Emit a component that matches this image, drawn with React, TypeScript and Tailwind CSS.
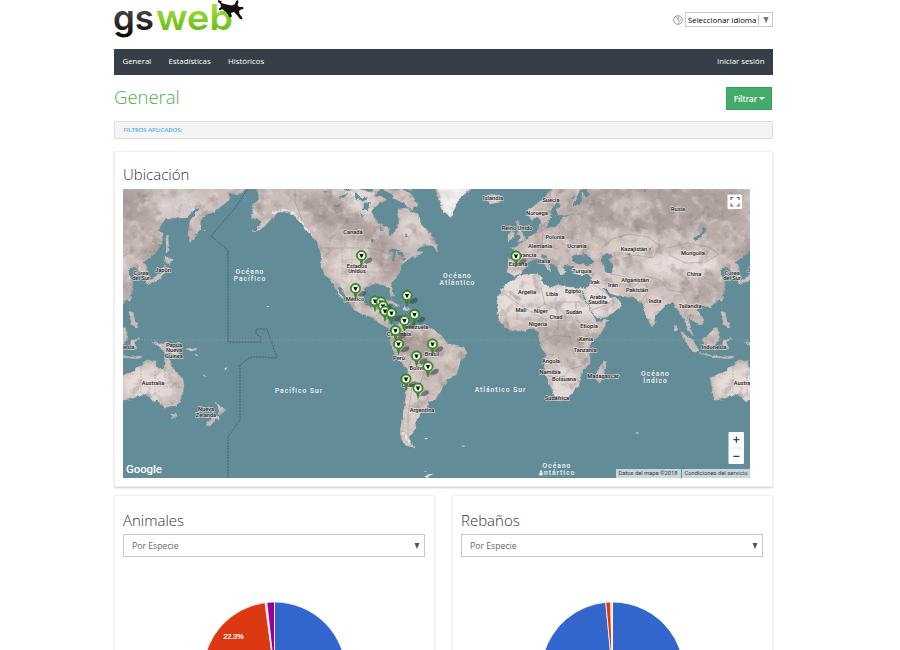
import React from "react";

const OPEN = "font-['Open_Sans','Noto_Sans',sans-serif]";

const EURASIA =
  "M554 189L560 193L566 189L588 189L590 195L586 198L582 192L582 201L576 206L571 208L575 215L562 217L560 222L556 227L548 228L544 229L541 223L538 226L538 232L531 236L525 241L518 246L510 247L517 252L519 257L508 259L508 272L513 276L520 274L525 268L527 261L533 260L537 258L542 263L548 268L551 272L549 266L544 260L541 255L546 255L550 261L556 266L560 274L565 273L562 266L568 264L573 266L573 273L580 275L588 274L592 278L590 285L586 289L580 288L585 297L590 308L597 318L607 317L617 310L622 302L615 297L610 298L603 288L606 288L612 294L622 297L635 298L642 303L645 313L652 328L655 322L656 315L661 310L667 304L673 302L678 310L683 317L687 327L693 337L690 325L688 318L695 322L702 325L703 318L697 310L700 305L710 307L718 300L723 294L725 283L722 276L719 270L727 267L733 271L740 279L739 267L735 262L741 258L748 252L754 242L755 233L749 231L758 218L778 218L783 213L788 209L793 207L782 222L780 235L782 243L786 237L793 228L792 222L796 215L806 212L815 205L821 200L821 193L830 195L838 189L838 180L554 180Z";
const SCANDINAVIA =
  "M552 180L552 189L547 196L540 202L530 208L528 216L531 220L537 217L540 220L543 228L547 227L548 220L552 217L550 210L554 205L560 200L561 205L557 210L558 215L565 215L574 214L572 205L576 200L580 189L580 180Z";
const AFRICA =
  "M520 275L512 280L502 288L497 300L497 313L500 322L508 330L522 331L533 328L539 333L540 345L546 353L543 367L548 380L553 393L558 399L568 397L577 388L580 382L582 370L590 365L590 353L588 347L597 337L603 330L608 320L597 322L594 317L588 307L583 297L579 288L568 287L557 285L550 288L542 282L540 274L530 274Z";
const N_AMERICA =
  "M251 180L251 189L258 190L259 200L252 205L254 212L251 217L259 220L262 223L252 233L264 227L272 218L279 212L289 213L297 218L306 230L314 238L321 250L321 267L327 277L333 283L341 298L345 302L337 287L340 287L347 298L353 309L362 314L372 317L379 323L388 328L395 332L394 327L388 323L386 316L378 313L382 306L379 300L373 307L366 305L362 297L366 287L374 284L383 285L389 288L391 297L394 297L391 283L400 272L401 265L408 260L417 255L424 252L415 251L424 245L433 246L437 252L438 247L433 238L427 230L420 222L417 212L411 213L408 208L398 209L398 223L394 235L390 236L389 228L378 223L372 216L373 207L380 203L387 199L374 196L380 189L380 180Z";
const S_AMERICA =
  "M395 326L390 334L390 341L393 350L398 360L408 370L407 387L405 403L402 420L400 433L402 440L407 447L415 448L409 441L411 434L416 428L415 422L421 416L420 410L428 407L429 402L435 400L441 391L447 380L457 373L460 363L467 352L464 347L447 343L440 334L433 329L426 327L416 325L410 324L401 321Z";
const ISLANDS =
  "M596 375L599 368L605 361L606 368L600 383L597 381ZM484 197L492 194L503 197L500 202L490 204ZM515 222L519 220L519 227L524 235L526 240L517 243L520 237L517 234L519 230ZM508 234L513 231L514 237L508 241ZM389 180L390 189L402 189L412 195L418 205L411 210L405 203L396 200L392 194L384 190L383 180ZM400 180L402 187L410 190L420 186L420 180ZM383 300L390 300L400 306L393 305ZM403 307L410 308L410 310L403 310ZM434 180L436 189L438 198L443 210L450 217L455 208L458 200L470 189L472 180ZM680 332L687 336L694 342L699 352L694 352L688 345ZM702 340L708 335L713 330L717 328L720 335L717 343L712 346L704 345ZM699 353L710 355L722 357L735 356L730 359L712 357ZM724 340L732 339L726 342L729 348L725 347L723 349ZM721 312L725 312L727 321L730 324L729 328L724 325ZM722 296L724 297L722 302L720 300ZM743 341L751 344L759 342L774 357L762 353L757 354L752 347ZM758 236L760 235L761 252L758 252ZM756 256L766 260L761 264L756 261ZM756 263L757 273L749 280L740 285L739 281L747 277L754 273ZM763 414L768 413L767 419L764 419ZM808 402L814 408L817 409L812 416L811 410ZM809 415L811 417L802 426L797 425L802 419ZM779 349L788 347L789 350L783 351ZM674 326l1 5 3-1-2-5Z";
const AUSTRALIA =
  "M715 376L710 378L712 387L714 401L725 398L735 394L739 395L746 402L749 400L756 407L768 407L774 397L776 385L773 377L766 370L761 358L757 358L756 370L748 367L748 361L739 360L733 365L723 373Z";
const LAND = [EURASIA, SCANDINAVIA, AFRICA, N_AMERICA, S_AMERICA, ISLANDS, AUSTRALIA].join(" ");

const LIGHT = "#e6dcd9";
const DARK = "#afa19e";

function World() {
  return (
    <g id="world">
      <g filter="url(#coast)">
        <path d={LAND} fill="#cabdb9" stroke="#b5b5b4" strokeWidth=".5" />
        <g clipPath="url(#landClip)">
          <g filter="url(#soft)">
            <path d="M495 272H585L625 300L608 318L545 316L495 318Z" fill={LIGHT} />
            <ellipse cx="560" cy="385" rx="20" ry="18" fill="#e2d8d5" />
            <ellipse cx="561" cy="337" rx="22" ry="12" fill="#b5a6a3" />
            <ellipse cx="660" cy="206" rx="100" ry="25" fill={DARK} />
            <ellipse cx="632" cy="206" rx="18" ry="12" fill="#cbbfbc" />
            <ellipse cx="570" cy="220" rx="22" ry="20" fill="#bcafab" />
            <ellipse cx="680" cy="265" rx="38" ry="12" fill={LIGHT} />
            <ellipse cx="635" cy="245" rx="32" ry="12" fill="#d8cbc5" />
            <ellipse cx="620" cy="280" rx="25" ry="10" fill="#dbcfcb" />
            <ellipse cx="705" cy="290" rx="20" ry="13" fill="#b5a7a3" />
            <ellipse cx="655" cy="307" rx="12" ry="15" fill="#d9cecb" />
            <ellipse cx="725" cy="230" rx="25" ry="12" fill="#b9aba7" />
            <ellipse cx="744" cy="255" rx="12" ry="12" fill="#b3a5a1" />
            <ellipse cx="770" cy="205" rx="30" ry="14" fill="#d5cbc8" />
            <ellipse cx="740" cy="385" rx="26" ry="17" fill={LIGHT} />
            <path d="M385 336L405 329L425 335L440 342L430 360L408 357L398 352Z" fill={DARK} />
            <ellipse cx="413" cy="410" rx="10" ry="38" fill="#dacfcc" />
            <path d="M295 195H345L360 215L392 240L405 270L388 282L365 235L320 228Z" fill={DARK} />
            <path d="M335 185H375L375 218L350 210Z" fill="#e2d9d6" />
            <ellipse cx="352" cy="268" rx="20" ry="20" fill="#dcd1cd" />
            <ellipse cx="393" cy="262" rx="14" ry="12" fill="#afa19e" />
            <ellipse cx="412" cy="228" rx="13" ry="14" fill="#ddd3d0" />
            <path d="M436 180H472L458 202L450 218L440 208Z" fill="#f5f3f2" />
          </g>
          <rect x="120" y="180" width="740" height="300" filter="url(#reliefDark)" opacity=".5" />
          <rect x="120" y="180" width="740" height="300" filter="url(#reliefLight)" opacity=".5" />
          <path d="M434 180H474L450 220Z" fill="#f3f1f0" opacity=".7" />
          <path d="M272 213L282 210L292 212L299 219L308 231L315 242M310 236L318 256M416 442L407 441L403 432" fill="none" stroke="#f5f2f1" strokeWidth="2.5" opacity=".75" strokeDasharray="5 1 2 2" />
        </g>
        <g fill="#628c97">
          <path d="M572 261L574 255L580 254L584 257L582 253L588 255L594 262L590 265L578 264Z" />
          <path d="M602 256L607 253L612 256L608 260L613 265L612 273L607 274L605 268L602 261Z" />
          <path d="M695 241L701 238L706 230L703 228L700 234L694 238Z" />
          <path d="M388 251l6-3 7 3-5 1-2 9-2 0 1-9ZM397 252l5 0 2 4-4 1ZM401 259l7-2-5 3ZM371 237l3 4 0 3-3-3ZM340 197l8-4-2 4-7 2ZM333 206l9-2-4 3ZM343 189l9 0-4 3ZM626 254l4-1-1 3ZM577 339l4 0 0 4-4-1ZM648 250l5-2-2 2Z" />
          <path d="M354 190l7 8 7-2-4 6-8-4ZM364 204l7-1-4 8-4-1ZM417 188l6 3-2 6 7 1-5 4-8-9ZM572 197l3-1-2 4ZM322 190l6 2-3 2ZM358 185l10 2 6 4-5 1-9-3ZM361 213l3 2-2 3ZM345 221l3-1-1 3ZM405 234l3 1-2 2ZM380 228l3 2-3 1ZM644 192l1-6 1 7Z" />
        </g>
      </g>
      <g fill="none" stroke="#8f8381" strokeWidth=".55" opacity=".75">
        <path d="M320 248H368L380 250L388 254M302 220l-7-18v-13" />
        <path d="M342 249v32l8 5 10 8M352 249v34M342 260h48M348 272h38M365 258v24M345 215h30M330 225v22M345 215v32M358 215v32" strokeWidth=".4" strokeDasharray="2 1" />
        <path d="M503 293l14 10 14 9 14-8-4-16M517 302v18M531 312l15 8v8M556 286v16h24M545 304l13 6v15M576 302l0 18 9 6M540 343l15-8 17 2M545 354l13 1 4 12M549 376l15 1 6-8 12-3M570 337l4 19 13 3" />
        <path d="M602 248l10-9 17-5 20 3 11 10-7 11-18-3-13 4M668 248l20-5 20 4 11 7-13 8-20 1-17-8M610 274l16 3 6 13-5 8M632 288l14-12 14 4 9 10 13 2 7 15M645 279l3 13-8 10M584 276l9 8 20 14M575 249l-12-5-4-12M558 249l-16-4 1-13M589 311l17-6 8-6" />
        <path d="M395 342l13 4 4 13-5 11M412 359l9 3 3 11 8 2M408 380l4 7-4 28v24M424 373l-4 12 8 8 7 2M398 331l15 7 13-11" />
        <path d="M733 364v30M747 371v24M757 370v17h17" strokeDasharray="2 1" />
      </g>
    </g>
  );
}

const PLACES: [string, number, number][] = [
  ["Islandia", 493, 200], ["Noruega", 537, 215], ["Suecia", 551, 202], ["Rusia", 678, 211],
  ["Reino Unido", 517, 230], ["Polonia", 555, 239], ["Alemania", 540, 248], ["Ucrania", 577, 248],
  ["Francia", 527, 257], ["España", 518, 266], ["Italia", 544, 263], ["Turquía", 582, 273],
  ["Kazajistán", 634, 251], ["Mongolia", 693, 255], ["China", 694, 276], ["Afganistán", 635, 282],
  ["Pakistán", 637, 292], ["Irak", 595, 284], ["Irán", 613, 287], ["India", 655, 303],
  ["Tailandia", 690, 308], ["Arabia", 598, 299], ["Saudita", 598, 304], ["Argelia", 527, 294],
  ["Libia", 552, 296], ["Egipto", 573, 293], ["Mali", 521, 312], ["Níger", 541, 313],
  ["Chad", 556, 319], ["Sudán", 574, 314], ["Nigeria", 538, 326], ["Etiopía", 589, 328],
  ["Kenia", 586, 341], ["Tanzania", 585, 352], ["Angola", 551, 363], ["Namibia", 550, 374],
  ["Botsuana", 564, 381], ["Madagascar", 603, 378], ["Sudáfrica", 557, 400], ["Indonesia", 714, 349],
  ["Canadá", 353, 234], ["Estados", 357, 268], ["Unidos", 357, 273], ["México", 355, 301],
  ["Venezuela", 415, 329], ["Colombia", 399, 336], ["Perú", 399, 360], ["Brasil", 432, 356],
  ["Bolivia", 418, 370], ["Chile", 408, 387], ["Argentina", 422, 412],
  ["Corea", 141, 275], ["del Sur", 141, 280], ["Japón", 163, 272], ["Corea", 732, 275], ["del Sur", 732, 280], ["Japón", 755, 272],
  ["Australia", 153, 385], ["Australia", 745, 385], ["Papúa", 174, 347], ["Nueva", 174, 352],
  ["Guinea", 174, 358], ["Nueva", 206, 411], ["Zelanda", 206, 417], ["Indonesia", 122, 349],
];

const OCEANS: [string, number, number][] = [
  ["Océano", 250, 274], ["Pacífico", 250, 281.5], ["Océano", 457.5, 278], ["Atlántico", 457.5, 285.5],
  ["Pacífico Sur", 299, 393.5], ["Atlántico Sur", 500.5, 392], ["Océano", 655.5, 376], ["Índico", 655.5, 383.5],
  ["Océano", 557, 468], ["Antártico", 557, 475.5],
];

const PINS: [number, number][] = [
  [361.5, 255.5], [516, 256], [355.5, 288.5], [407, 295.5], [375, 301], [381, 302], [383, 306], [385, 311],
  [391.5, 313], [414.5, 314.5], [404.5, 320.5], [395.5, 330.5], [398.5, 344], [432.5, 344],
  [416.5, 356], [428, 366.5], [406, 379], [418, 388],
];

function Pin({ x, y }: { x: number; y: number }) {
  return (
    <g transform={`translate(${x} ${y})`}>
      <path d="M0 10L4 4.5Q7 1.5 10 2.5Q12 4.500 9 7Q6 9 2.500 7.500Z" fill="#304047" opacity=".55" />
      <path d="M0 10.500L-1.600 4.800C-4 3.800-5.200 2-5.200 0A5.200 5.200 0 0 1 5.200 0C5.200 2 4 3.800 1.600 4.800Z" fill="#37941d" stroke="#2b6f1b" strokeWidth=".5" />
      <circle r="3.600" fill="#fff" />
      <path d="M-2.200-1.900L-.9-1.400H.9L2.200-1.900L1.600-.3L.7 2H-.7L-1.600-.3Z" fill="#111" />
    </g>
  );
}

function WorldMap() {
  return (
    <svg viewBox="123 189 627 289" className="block h-[289px] w-[627px]" fontFamily="Roboto, 'Liberation Sans', sans-serif">
      <defs>
        <clipPath id="landClip"><path d={LAND} /></clipPath>
        <filter id="soft" x="-10%" y="-10%" width="120%" height="120%"><feGaussianBlur stdDeviation="3.500" /></filter>
        <filter id="coast" x="0" y="0" width="100%" height="100%" colorInterpolationFilters="sRGB">
          <feTurbulence type="fractalNoise" baseFrequency=".22" numOctaves="2" seed="3" result="n" />
          <feDisplacementMap in="SourceGraphic" in2="n" scale="4" xChannelSelector="R" yChannelSelector="G" />
        </filter>
        <filter id="reliefDark" x="0" y="0" width="100%" height="100%" colorInterpolationFilters="sRGB">
          <feTurbulence type="fractalNoise" baseFrequency=".09" numOctaves="5" seed="8" />
          <feColorMatrix values="0 0 0 0 .56  0 0 0 0 .5  0 0 0 0 .49  3.2 0 0 0 -1.6" />
        </filter>
        <filter id="reliefLight" x="0" y="0" width="100%" height="100%" colorInterpolationFilters="sRGB">
          <feTurbulence type="fractalNoise" baseFrequency=".11" numOctaves="5" seed="21" />
          <feColorMatrix values="0 0 0 0 .92  0 0 0 0 .88  0 0 0 0 .87  3.2 0 0 0 -1.6" />
        </filter>
      </defs>
      <rect x="123" y="189" width="627" height="289" fill="#628c97" />
      <World />
      <use href="#world" x="-592" />
      <g fill="#e5e1df">
        <path d="M196 231l3-1-2 1ZM249 235l3-2-3 2ZM204 230l2 1-2 0ZM202 374l5 3-3-1ZM224 369l3-2-1 3ZM194 354l4 1-1 1ZM267 306h1.500v1h-1.500ZM424 438l4 0-2 1.500ZM461 445l4 1-1 1ZM636 432.500h2.500v1h-2.500ZM423 472l4-1-1 1ZM424 477l5-3 5 0-5 2-1 2ZM539 475l3-3v4Z" />
      </g>
      <g fill="none" stroke="#42555c" strokeWidth=".8" strokeDasharray="2 1">
        <path d="M247 190L235 208L211 236L228 250V342H261V337L256 334V329H267L277 358H270L267 357H250L240 365V420L228 437V478" />
        <path d="M123 340H750" stroke="#b1b0ad" strokeWidth=".7" opacity=".65" />
      </g>
      <g fontSize="5.700" fontWeight="500" fill="#242424" stroke="#eee7e4" strokeWidth="1.300" strokeOpacity=".75" paintOrder="stroke" textAnchor="middle">
        {PLACES.map(([name, x, y], i) => <text key={i} x={x} y={y}>{name}</text>)}
      </g>
      <g fontSize="6.700" fontWeight="500" fill="#f2f6f7" letterSpacing="1" textAnchor="middle">
        {OCEANS.map(([name, x, y], i) => <text key={i} x={x} y={y - 0.5}>{name}</text>)}
      </g>
      {PINS.map(([x, y], i) => <Pin key={i} x={x} y={y} />)}
      <text x="126" y="473" fontSize="11.500" fontWeight="500" fill="#fff" textLength="36" fontFamily="Roboto, sans-serif">Google</text>
      <rect x="727.500" y="194.500" width="14.500" height="14.500" rx="1" fill="#fff" />
      <path d="M731 200v-2.500h2.500M736.500 197.500h2.500v2.500M739 203.500v2.500h-2.500M733.500 206h-2.500v-2.500" fill="none" stroke="#666" strokeWidth="1.200" />
      <rect x="728.500" y="432" width="15.500" height="32" rx="1" fill="#fff" />
      <path d="M731 448h10.500" stroke="#e2e2e2" />
      <path d="M733.300 439.700h6.200M736.400 436.600v6.200M733.300 456.300h6.200" stroke="#444" strokeWidth="1.300" />
      <rect x="616" y="469" width="65" height="9" fill="#c9d7dc" />
      <rect x="682" y="469" width="68" height="9" fill="#c9d7dc" />
      <g fontSize="5.800" fill="#333">
        <text x="618.500" y="475.300" textLength="59">Datos del mapa ©2018</text>
        <text x="684.500" y="475.300" textLength="63">Condiciones del servicio</text>
      </g>
    </svg>
  );
}

function Logo() {
  return (
    <svg viewBox="0 0 132 40" className="block h-10 w-[132px] overflow-visible" fontFamily="Inter, sans-serif" fontWeight="600">
      <defs>
        <linearGradient id="ink" gradientUnits="userSpaceOnUse" x1="0" y1="10" x2="0" y2="38"><stop offset="0" stopColor="#484848" /><stop offset="1" stopColor="#050505" /></linearGradient>
        <linearGradient id="lime" gradientUnits="userSpaceOnUse" x1="0" y1="2" x2="0" y2="31"><stop offset="0" stopColor="#a6e438" /><stop offset="1" stopColor="#67bd16" /></linearGradient>
      </defs>
      <text x="-1" y="30" fontSize="35" textLength="41" lengthAdjust="spacingAndGlyphs" fill="url(#ink)">gs</text>
      <text x="42" y="30" fontSize="35" textLength="77" lengthAdjust="spacingAndGlyphs" fill="url(#lime)">web</text>
      <path d="M104 0L108 1.500L107 3L111 4L115 5L118 5.500L121 4L122 1L124 0L124.500 2L123.500 5L125 7L129 7L129.500 9L127 9.500L125 11L125.500 14L128 17L128.500 19.500L126 19L123 15L120 12L117 13L118 16.500L115 17.500L114.500 15L112 12L108 9L106 10.500L104.500 9L107 7L106.500 4L104 2Z" fill="#151010" />
    </svg>
  );
}

function Card({ title, children }: { title: string; children: React.ReactNode }) {
  return (
    <section className="h-[335px] w-[321px] shrink-0 rounded-[2px] border border-[#f0f0f0] bg-white px-[8px] pt-[12px] shadow-[0_1px_2px_rgba(0,0,0,0.15)]">
      <h2 className="h-[26px] text-[15px] leading-[24px] font-light text-[#333]">{title}</h2>
      <div className="flex h-[23px] w-[302px] items-center justify-between border border-[#c8c8c8] pr-[4px] pl-[8px] text-[8.700px] text-[#666]">
        <span className="pt-[2px]">Por Especie</span>
        <svg className="h-[6px] w-[6px]" viewBox="0 0 6 6"><path d="M.5 0h5L3 6Z" fill="#555" /></svg>
      </div>
      {children}
    </section>
  );
}

function Pie({ slices, label }: { slices: [number, number, string][]; label?: string }) {
  const pt = (p: number) => {
    const a = (p / 100) * Math.PI * 2;
    return `${71.5 * Math.sin(a)} ${-71.5 * Math.cos(a)}`;
  };
  return (
    <svg className="mt-[40px] ml-[76px] block h-[150px] w-[150px]" viewBox="-75.500 -76.500 150 150">
      {slices.map(([from, to, color], i) => (
        <path key={i} d={`M0 0L${pt(from)}A71.5 71.5 0 ${to - from > 50 ? 1 : 0} 1 ${pt(to)}Z`} fill={color} stroke="#fff" strokeWidth=".8" />
      ))}
      {label && <text x="-41" y="-34.500" fontSize="7" fill="#fff" stroke="#fff" strokeWidth=".2" textAnchor="middle" fontFamily="'Liberation Sans', Arial, sans-serif">{label}</text>}
    </svg>
  );
}

export default function App() {
  return (
    <div className={`h-[650px] w-[900px] overflow-hidden bg-white pl-[114px] ${OPEN}`}>
      <div className="w-[659px]">
        <header className="flex h-[49px] items-start justify-between">
          <Logo />
          <div className="mt-[12px] flex items-center gap-[2px]">
            <svg className="h-[10px] w-[10px]" viewBox="0 0 10 10" fill="none" stroke="#999"><circle cx="5" cy="5" r="4.300" /><path d="M2.500 2l2 1 0 2 2 1-1 3M6 1l-1 2 3 2" strokeWidth=".8" /></svg>
            <div className="flex h-[15px] w-[88px] items-center border border-[#ccc] pl-[2px] text-[7.800px] text-black">
              <span className="w-[70px] pt-[2px] whitespace-nowrap">Seleccionar idioma</span>
              <span className="flex h-[10px] flex-1 items-center justify-center border-l border-[#bbb]">
                <svg className="h-[6px] w-[6px]" viewBox="0 0 6 6"><path d="M.3 0h5.400L3 6Z" fill="#777" /></svg>
              </span>
            </div>
          </div>
        </header>
        <nav className="flex h-[26px] items-center bg-[#363f48] px-[8.500px] text-[7.800px] text-white">
          <span className="w-[46px]">General</span>
          <span className="w-[59.500px]">Estadísticas</span>
          <span>Históricos</span>
          <span className="ml-auto">Iniciar sesión</span>
        </nav>
        <div className="flex h-[46px] items-center justify-between pr-px">
          <h1 className="-mt-[2px] text-[18.500px] font-light text-[#4cae4c]">General</h1>
          <button className="mt-px flex h-[23px] w-[46px] items-center justify-center gap-[2px] border border-[#38a05f] bg-[#43ac6a] pl-px text-[8px] font-semibold text-white">
            Filtrar
            <svg className="h-[3px] w-[6px]" viewBox="0 0 6 3"><path d="M0 0h6L3 3Z" fill="#fff" /></svg>
          </button>
        </div>
        <div className="flex h-[18px] items-center rounded-[1px] border border-[#ddd] bg-[#f4f4f4] pl-[8.500px] text-[5.900px] font-semibold text-[#4ab1dc]">FILTROS APLICADOS:</div>
        <section className="mt-[12px] h-[336px] rounded-[2px] border border-[#f0f0f0] bg-white pt-[10px] pl-[8px] shadow-[0_1px_2px_rgba(0,0,0,0.2)]">
          <h2 className="h-[27px] text-[15px] leading-[24px] font-light text-[#333]">Ubicación</h2>
          <WorldMap />
        </section>
        <div className="mt-[8px] flex justify-between">
          <Card title="Animales">
            <Pie label="22.3%" slices={[[0, 75.6, "#3366cc"], [75.6, 97.9, "#dc3912"], [97.9, 98.3, "#ffcf80"], [98.3, 100, "#990099"]]} />
          </Card>
          <Card title="Rebaños">
            <Pie slices={[[0, 60, "#3366cc"], [60, 98.5, "#3366cc"], [98.5, 99.6, "#dc3912"], [99.6, 100, "#ffcf80"]]} />
          </Card>
        </div>
      </div>
    </div>
  );
}
